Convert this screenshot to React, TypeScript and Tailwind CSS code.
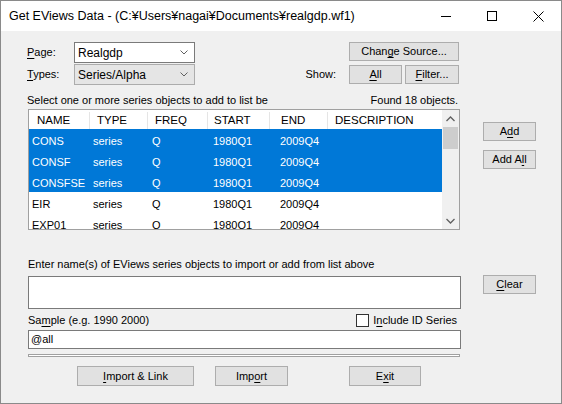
import type { ReactNode } from "react";

type Row = {
  name: string;
  type: string;
  freq: string;
  start: string;
  end: string;
  selected?: boolean;
};

const rows: Row[] = [
  { name: "CONS", type: "series", freq: "Q", start: "1980Q1", end: "2009Q4", selected: true },
  { name: "CONSF", type: "series", freq: "Q", start: "1980Q1", end: "2009Q4", selected: true },
  { name: "CONSFSE", type: "series", freq: "Q", start: "1980Q1", end: "2009Q4", selected: true },
  { name: "EIR", type: "series", freq: "Q", start: "1980Q1", end: "2009Q4" },
  { name: "EXP01", type: "series", freq: "Q", start: "1980Q1", end: "2009Q4" },
];

// mnemonic letter (Alt+key) underline
const U = ({ children }: { children: ReactNode }) => (
  <span className="underline decoration-1 underline-offset-[2px]">{children}</span>
);

const Button = ({
  children,
  className = "",
}: {
  children: ReactNode;
  className?: string;
}) => (
  <div
    className={`flex items-center justify-center border border-[#adadad] bg-[#e1e1e1] text-[11px] leading-none text-black ${className}`}
  >
    {children}
  </div>
);

const Chevron = () => (
  <svg width="8" height="5" viewBox="0 0 8 5" className="shrink-0">
    <path d="M0.5 0.5 L4 4 L7.5 0.5" fill="none" stroke="#606060" strokeWidth="1" />
  </svg>
);

const Combo = ({ value, disabled }: { value: string; disabled?: boolean }) => (
  <div
    className={
      disabled
        ? "flex h-[21px] w-[121px] items-center justify-between border border-[#acacac] bg-[#e5e5e5] pl-[3px] pr-[6px] text-[12px]"
        : "flex h-[21px] w-[121px] items-center justify-between border border-[#7a7a7a] bg-white pl-[3px] pr-[6px] text-[12px]"
    }
  >
    <span>{value}</span>
    <Chevron />
  </div>
);

const TitleBar = () => (
  <div className="flex h-[30px] items-center bg-white">
    <span className="flex-1 pl-[8px] text-[12.5px] text-black">
      Get EViews Data - (C:¥Users¥nagai¥Documents¥realgdp.wf1)
    </span>
    <div className="flex h-full">
      <div className="flex w-[46px] items-center justify-center">
        <svg width="10" height="10" viewBox="0 0 10 10">
          <path d="M0 5.5 H10" stroke="#000" strokeWidth="1" />
        </svg>
      </div>
      <div className="flex w-[46px] items-center justify-center">
        <svg width="10" height="10" viewBox="0 0 10 10">
          <rect x="0.5" y="0.5" width="9" height="9" fill="none" stroke="#000" strokeWidth="1" />
        </svg>
      </div>
      <div className="flex w-[46px] items-center justify-center">
        <svg width="11" height="11" viewBox="0 0 11 11">
          <path d="M0.5 0.5 L10.5 10.5 M10.5 0.5 L0.5 10.5" stroke="#000" strokeWidth="1" />
        </svg>
      </div>
    </div>
  </div>
);

const SeriesList = () => (
  <div className="ml-px flex h-[121px] w-[432px] overflow-hidden border border-[#a0a0a0] bg-white">
    <div className="flex-1 overflow-hidden text-[11px]">
      <div className="flex h-[19px] items-center bg-white pt-[2px] text-[11.5px] text-black">
        <div className="w-[61px] border-r border-[#e5e5e5] pl-[8px]">NAME</div>
        <div className="w-[58px] border-r border-[#e5e5e5] pl-[7px]">TYPE</div>
        <div className="w-[60px] border-r border-[#e5e5e5] pl-[7px]">FREQ</div>
        <div className="w-[62px] border-r border-[#e5e5e5] pl-[6px]">START</div>
        <div className="w-[58px] border-r border-[#e5e5e5] pl-[11px]">END</div>
        <div className="flex-1 pl-[7px]">DESCRIPTION</div>
      </div>
      {rows.map((r) => (
        <div
          key={r.name}
          className={
            r.selected
              ? "flex h-[21px] items-center bg-[#0078d7] pt-[3px] text-white"
              : "flex h-[21px] items-center bg-white pt-[3px] text-black"
          }
        >
          <div className="w-[61px] pl-[3px]">{r.name}</div>
          <div className="w-[58px] pl-[3px]">{r.type}</div>
          <div className="w-[60px] pl-[4px]">{r.freq}</div>
          <div className="w-[62px] pl-[5px]">{r.start}</div>
          <div className="w-[58px] pl-[10px]">{r.end}</div>
          <div className="flex-1" />
        </div>
      ))}
    </div>
    <div className="flex w-[17px] flex-col bg-[#f0f0f0]">
      <div className="flex h-[17px] items-center justify-center">
        <svg width="9" height="6" viewBox="0 0 9 6">
          <path d="M0.5 5 L4.5 1 L8.5 5" fill="none" stroke="#606060" strokeWidth="1.3" />
        </svg>
      </div>
      <div className="mx-px h-[22px] bg-[#cdcdcd]" />
      <div className="flex-1" />
      <div className="flex h-[17px] items-center justify-center">
        <svg width="9" height="6" viewBox="0 0 9 6">
          <path d="M0.5 1 L4.5 5 L8.5 1" fill="none" stroke="#606060" strokeWidth="1.3" />
        </svg>
      </div>
    </div>
  </div>
);

export default function App() {
  return (
    <div className="flex h-[404px] w-[562px] flex-col border border-[#8a8a8a] bg-[#f0f0f0] font-['Liberation_Sans',Arial,sans-serif] text-[11px] text-black">
      <TitleBar />

      <div className="flex flex-col pl-[26px] pt-[11px]">
        {/* page / types + source buttons */}
        <div className="flex w-[434px]">
          <div className="flex flex-col gap-px">
            <div className="flex items-center">
              <span className="w-[47px]">
                <U>P</U>age:
              </span>
              <Combo value="Realgdp" />
            </div>
            <div className="flex items-center">
              <span className="w-[47px]">
                <U>T</U>ypes:
              </span>
              <Combo value="Series/Alpha" disabled />
            </div>
          </div>
          <div className="ml-auto mr-[2px] flex flex-col items-end">
            <Button className="h-[19px] w-[110px]">
              Chan<U>g</U>e Source...
            </Button>
            <div className="mt-[4px] flex items-center">
              <span className="mr-[13px]">Show:</span>
              <Button className="h-[19px] w-[53px]">
                <U>A</U>ll
              </Button>
              <Button className="ml-[3px] h-[19px] w-[54px]">
                <U>F</U>ilter...
              </Button>
            </div>
          </div>
        </div>

        <div className="mt-[9px] flex w-[434px] justify-between leading-[13px]">
          <span>Select one or more series objects to add to list be</span>
          <span className="pr-[3px]">Found 18 objects.</span>
        </div>

        <div className="mt-[2px] flex items-start">
          <SeriesList />
          <div className="ml-[23px] mt-[13px] flex flex-col gap-[9px]">
            <Button className="h-[19px] w-[53px]">
              A<U>d</U>d
            </Button>
            <Button className="h-[19px] w-[53px]">
              Add A<U>l</U>l
            </Button>
          </div>
        </div>

        <div className="mt-[27px] pl-px leading-[14px]">
          Enter name(s) of EViews series objects to import or add from list above
        </div>

        <div className="mt-[5px] flex items-start">
          <div className="ml-px h-[33px] w-[433px] border border-[#7a7a7a] bg-white" />
          <Button className="-mt-px ml-[22px] h-[19px] w-[53px]">
            <U>C</U>lear
          </Button>
        </div>

        <div className="mt-[4px] flex h-[14px] w-[434px] items-center pl-px">
          <span>
            Sa<U>m</U>ple (e.g. 1990 2000)
          </span>
          <div className="ml-auto flex items-center pr-[4px]">
            <div className="h-[13px] w-[13px] border border-[#333] bg-white" />
            <span className="ml-[4px]">
              I<U>n</U>clude ID Series
            </span>
          </div>
        </div>

        <div className="ml-px mt-[3px] flex h-[19px] w-[433px] items-center border border-[#7a7a7a] bg-white pl-[2px]">
          @all
        </div>

        <div className="ml-px mt-[5px] h-[3px] w-[432px] border border-[#a0a0a0] bg-white" />

        <div className="mt-[9px] flex">
          <Button className="ml-[50px] h-[20px] w-[117px]">
            <U>I</U>mport &amp; Link
          </Button>
          <Button className="ml-[21px] h-[20px] w-[73px]">
            Imp<U>o</U>rt
          </Button>
          <Button className="ml-[61px] h-[20px] w-[72px]">
            E<U>x</U>it
          </Button>
        </div>
      </div>
    </div>
  );
}
